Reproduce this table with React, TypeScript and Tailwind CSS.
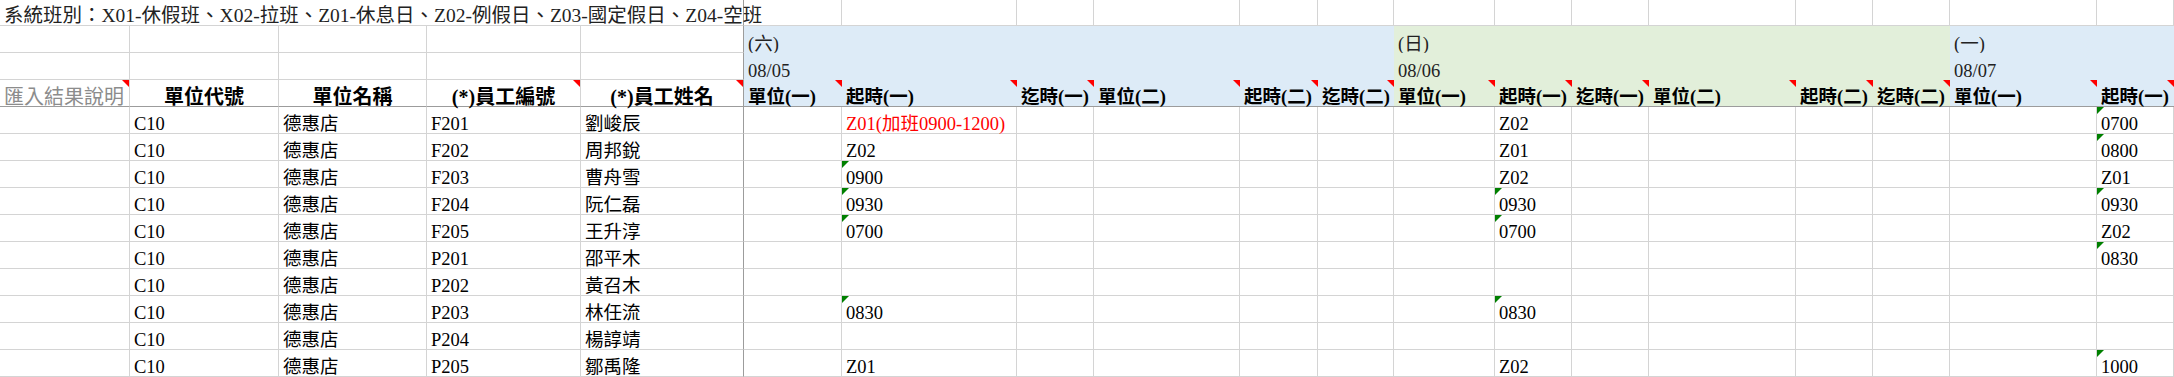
import React from "react";

const GRID =
  "grid grid-cols-[130px_149px_148px_154px_163px_98px_175px_77px_146px_78px_76px_101px_77px_77px_147px_77px_77px_147px_77px]";

const days = [
  { week: "(六)", date: "08/05", fill: "bg-[#ddebf7]", start: 5, end: 10 },
  { week: "(日)", date: "08/06", fill: "bg-[#e2efda]", start: 11, end: 16 },
  { week: "(一)", date: "08/07", fill: "bg-[#ddebf7]", start: 17, end: 18 },
];

const dayHeads = ["單位(一)", "起時(一)", "迄時(一)", "單位(二)", "起時(二)", "迄時(二)"];

const people = [
  ["F201", "劉峻辰"],
  ["F202", "周邦銳"],
  ["F203", "曹舟雪"],
  ["F204", "阮仁磊"],
  ["F205", "王升淳"],
  ["P201", "邵平木"],
  ["P202", "黃召木"],
  ["P203", "林任流"],
  ["P204", "楊諄靖"],
  ["P205", "鄒禹隆"],
];

// [text, has green marker]
type Val = [string, boolean];
const shifts: Record<number, Val[]> = {
  6: [
    ["Z01(加班0900-1200)", false],
    ["Z02", false],
    ["0900", true],
    ["0930", true],
    ["0700", true],
    ["", false],
    ["", false],
    ["0830", true],
    ["", false],
    ["Z01", false],
  ],
  12: [
    ["Z02", false],
    ["Z01", false],
    ["Z02", false],
    ["0930", true],
    ["0700", true],
    ["", false],
    ["", false],
    ["0830", true],
    ["", false],
    ["Z02", false],
  ],
  18: [
    ["0700", true],
    ["0800", true],
    ["Z01", false],
    ["0930", true],
    ["Z02", false],
    ["0830", true],
    ["", false],
    ["", false],
    ["", false],
    ["1000", true],
  ],
};

const RedFlag = () => (
  <svg width="7" height="7" viewBox="0 0 7 7" className="absolute top-0 right-0">
    <polygon points="0,0 7,0 7,7" fill="#ff0000" />
  </svg>
);

const GreenFlag = () => (
  <svg width="7" height="7" viewBox="0 0 7 7" className="absolute top-0 left-0">
    <polygon points="0,0 7,0 0,7" fill="#008000" />
  </svg>
);

const dayOf = (i: number) => days.find((d) => i >= d.start && i <= d.end);

const App = () => {
  const idx = Array.from({ length: 19 }, (_, i) => i);

  const plain = (i: number) =>
    i === 4
      ? "relative flex items-end whitespace-nowrap pl-[4px] leading-[18px] border-b border-r border-b-[#d4d4d4] border-r-[#9c9c9c]"
      : "relative flex items-end whitespace-nowrap pl-[4px] leading-[18px] border-b border-r border-[#d4d4d4]";

  return (
    <div className="w-[2174px] h-[377px] overflow-hidden bg-white text-black text-[18.5px] [font-family:'Liberation_Serif','Noto_Sans_CJK_TC',serif]">
      {/* row 1 */}
      <div className={`${GRID} h-[26px]`}>
        <div className="col-span-5 flex items-end whitespace-nowrap pl-[4px] leading-[18px] text-[19.5px] text-[#222] border-b border-r border-b-[#d4d4d4] border-r-[#9c9c9c]">
          系統班別：X01-休假班、X02-拉班、Z01-休息日、Z02-例假日、Z03-國定假日、Z04-空班
        </div>
        {idx.slice(5).map((i) => (
          <div key={i} className={plain(i)} />
        ))}
      </div>

      {/* rows 2 and 3: weekday and date */}
      {(["week", "date"] as const).map((k) => (
        <div key={k} className={`${GRID} h-[27px]`}>
          {idx.map((i) => {
            const d = dayOf(i);
            if (!d) return <div key={i} className={plain(i)} />;
            return (
              <div
                key={i}
                className={`${d.fill} relative flex items-end whitespace-nowrap pl-[4px] leading-[18px] text-[#222]`}
              >
                {i === d.start ? d[k] : ""}
              </div>
            );
          })}
        </div>
      ))}

      {/* row 4: headers */}
      <div className={`${GRID} h-[27px]`}>
        <div className="relative flex items-end whitespace-nowrap pl-[4px] leading-[18px] text-[20px] text-[#8c8c8c] border-b border-r border-b-[#9c9c9c] border-r-[#d4d4d4]">
          匯入結果說明
          <RedFlag />
        </div>
        {["單位代號", "單位名稱", "(*)員工編號", "(*)員工姓名"].map((t, j) => (
          <div
            key={t}
            className={
              j === 3
                ? "relative flex items-end justify-center whitespace-nowrap leading-[18px] text-[20px] font-bold border-b border-r border-[#9c9c9c]"
                : "relative flex items-end justify-center whitespace-nowrap leading-[18px] text-[20px] font-bold border-b border-r border-b-[#9c9c9c] border-r-[#d4d4d4]"
            }
          >
            {t}
            {j >= 2 && <RedFlag />}
          </div>
        ))}
        {idx.slice(5).map((i) => {
          const d = dayOf(i)!;
          return (
            <div
              key={i}
              className={`${d.fill} relative flex items-end whitespace-nowrap pl-[4px] leading-[18px] font-bold border-b border-[#9c9c9c]`}
            >
              {dayHeads[i - d.start]}
              <RedFlag />
            </div>
          );
        })}
      </div>

      {/* data rows */}
      {people.map(([id, name], r) => (
        <div key={id} className={`${GRID} h-[27px]`}>
          {idx.map((i) => {
            let text = "";
            let green = false;
            let red = false;
            if (i === 1) text = "C10";
            if (i === 2) text = "德惠店";
            if (i === 3) text = id;
            if (i === 4) text = name;
            if (shifts[i]) {
              [text, green] = shifts[i][r];
              red = text.includes("加班");
            }
            return (
              <div key={i} className={`${plain(i)} ${red ? "text-[#ff0000]" : ""}`}>
                {text}
                {green && <GreenFlag />}
              </div>
            );
          })}
        </div>
      ))}
    </div>
  );
};

export default App;
